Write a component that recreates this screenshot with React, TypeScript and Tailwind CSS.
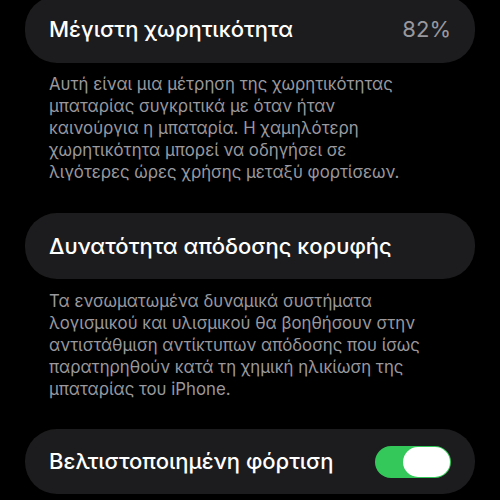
import React from "react";

const font = { fontFamily: "Inter, 'Noto Sans', sans-serif" };

const Card = ({ children, className = "" }: { children: React.ReactNode; className?: string }) => (
  <div className={`mx-[25px] flex items-center justify-between rounded-[32px] bg-[#1c1c1e] px-6 ${className}`}>
    {children}
  </div>
);

const Note = ({ lines, className = "" }: { lines: string[]; className?: string }) => (
  <div className={`px-[49px] text-[16.8px] leading-[22px] text-[#98989e] ${className}`}>
    {lines.map((l) => (
      <div key={l} className="whitespace-nowrap">{l}</div>
    ))}
  </div>
);

export default function App() {
  return (
    <div className="h-[500px] w-[500px] overflow-hidden bg-black" style={font}>
      <Card className="-mt-[4px] h-[67px]">
        <span className="text-[22px] font-medium text-white">Μέγιστη χωρητικότητα</span>
        <span className="text-[22px] text-[#98989e]">82%</span>
      </Card>
      <Note
        className="mt-[10px]"
        lines={[
          "Αυτή είναι μια μέτρηση της χωρητικότητας",
          "μπαταρίας συγκριτικά με όταν ήταν",
          "καινούργια η μπαταρία. Η χαμηλότερη",
          "χωρητικότητα μπορεί να οδηγήσει σε",
          "λιγότερες ώρες χρήσης μεταξύ φορτίσεων.",
        ]}
      />
      <Card className="mt-[30px] h-[66px]">
        <span className="text-[22px] font-medium text-white">Δυνατότητα απόδοσης κορυφής</span>
      </Card>
      <Note
        className="mt-[11px]"
        lines={[
          "Τα ενσωματωμένα δυναμικά συστήματα",
          "λογισμικού και υλισμικού θα βοηθήσουν στην",
          "αντιστάθμιση αντίκτυπων απόδοσης που ίσως",
          "παρατηρηθούν κατά τη χημική ηλικίωση της",
          "μπαταρίας του iPhone.",
        ]}
      />
      <Card className="mt-[29px] h-[65px]">
        <span className="text-[22px] font-medium text-white">Βελτιστοποιημένη φόρτιση</span>
        <div className="flex h-[32px] w-[76px] items-center justify-end rounded-full bg-[#34c759] p-[1px]">
          <div className="h-[30px] w-[47px] rounded-full bg-white" />
        </div>
      </Card>
    </div>
  );
}
